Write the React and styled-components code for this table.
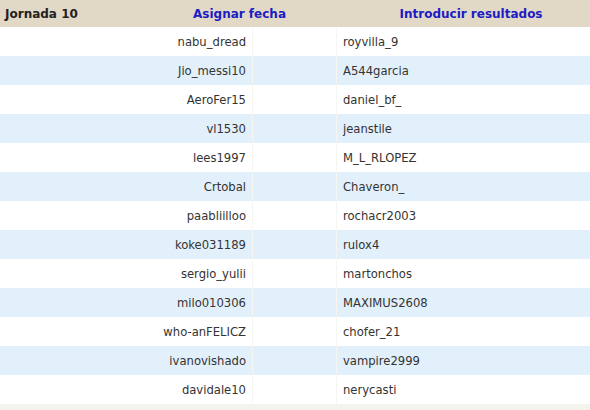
import React from 'react'
import styled, { createGlobalStyle } from 'styled-components'

const colors = {
  header: '#e2d8c6',
  stripe: '#e2f0fb',
  text: '#333333',
  link: '#1c1cc4',
  rule: '#f5f5f2',
  page: '#f5f3ee',
}

const GlobalStyle = createGlobalStyle`
  body {
    margin: 0;
    background: ${colors.page};
    font-family: Verdana, "DejaVu Sans", sans-serif;
  }
`

const Board = styled.div`
  width: 590px;
  display: flex;
  flex-direction: column;
`

const HeaderRow = styled.div`
  display: grid;
  grid-template-columns: 127px 225px 1fr;
  align-items: center;
  height: 27px;
  background: ${colors.header};
  font-size: 12px;
  font-weight: bold;
`

const Title = styled.span`
  color: #222;
  padding-left: 5px;
`

const HeaderLink = styled.a`
  color: ${colors.link};
  text-align: center;
  text-decoration: none;
`

const Row = styled.div`
  display: grid;
  grid-template-columns: 253px 84px 1fr;
  height: 29px;
  background: ${(p) => (p.$striped ? colors.stripe : '#ffffff')};
  font-size: 11.6px;
  color: ${colors.text};
`

const Cell = styled.div`
  display: flex;
  align-items: center;
  padding: 0 6px;
  justify-content: ${(p) => (p.$right ? 'flex-end' : 'flex-start')};
  border-right: 1px solid ${(p) => (p.$plain ? 'transparent' : colors.rule)};
`

const matches = [
  ['nabu_dread', 'royvilla_9'],
  ['Jio_messi10', 'A544garcia'],
  ['AeroFer15', 'daniel_bf_'],
  ['vl1530', 'jeanstile'],
  ['lees1997', 'M_L_RLOPEZ'],
  ['Crtobal', 'Chaveron_'],
  ['paabliilloo', 'rochacr2003'],
  ['koke031189', 'rulox4'],
  ['sergio_yulii', 'martonchos'],
  ['milo010306', 'MAXIMUS2608'],
  ['who-anFELICZ', 'chofer_21'],
  ['ivanovishado', 'vampire2999'],
  ['davidale10', 'nerycasti'],
]

export default function App() {
  return (
    <>
      <GlobalStyle />
      <Board>
        <HeaderRow>
          <Title>Jornada 10</Title>
          <HeaderLink href='#'>Asignar fecha</HeaderLink>
          <HeaderLink href='#'>Introducir resultados</HeaderLink>
        </HeaderRow>
        {matches.map(([home, away], i) => (
          <Row key={home} $striped={i % 2 === 1}>
            <Cell $right>{home}</Cell>
            <Cell />
            <Cell $plain>{away}</Cell>
          </Row>
        ))}
      </Board>
    </>
  )
}
